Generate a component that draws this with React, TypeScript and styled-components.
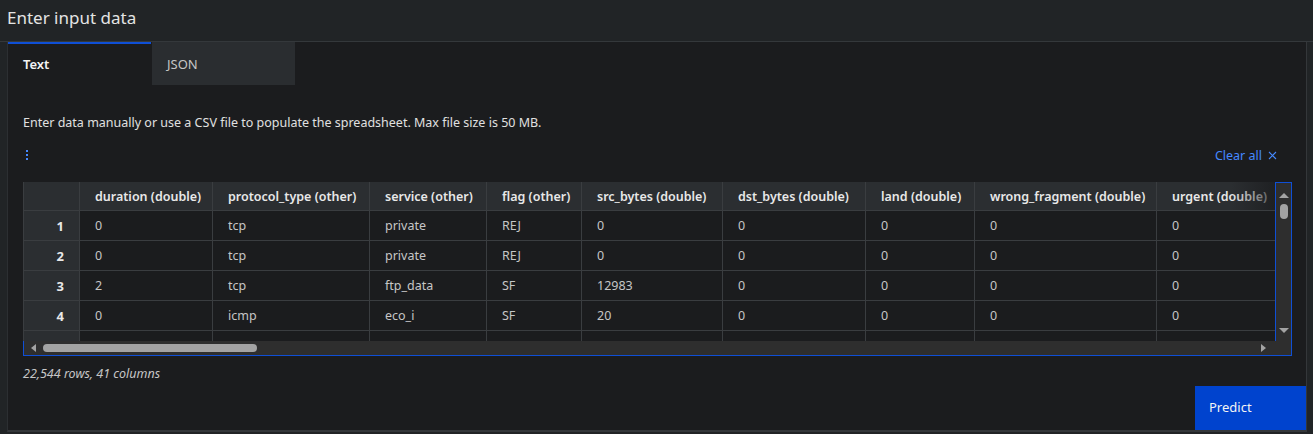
import React from 'react';
import styled, { createGlobalStyle } from 'styled-components';

const GlobalStyle = createGlobalStyle`
  html, body {
    margin: 0;
    padding: 0;
    background: #212426;
  }
  * {
    box-sizing: border-box;
  }
`;

const Page = styled.div`
  height: 434px;
  background: #212426;
  font-family: 'Noto Sans', 'Liberation Sans', sans-serif;
  color: #e0e0e0;
  display: flex;
  flex-direction: column;
  overflow: hidden;
`;

const Title = styled.h2`
  margin: 0;
  height: 42px;
  padding: 6px 0 0 7px;
  font-size: 17px;
  font-weight: 400;
  color: #e4e4e4;
  border-bottom: 1px solid #34383b;
`;

const Panel = styled.section`
  margin: 0 6px 0 7px;
  height: 390px;
  background: #1b1c1e;
  border-left: 1px solid #2c2f32;
  border-right: 1px solid #34373a;
  border-bottom: 2px solid #34373a;
  display: flex;
  flex-direction: column;
`;

const TabList = styled.div`
  display: flex;
  gap: 1px;
  height: 43px;
`;

const Tab = styled.div<{ $active?: boolean }>`
  width: 143px;
  display: flex;
  align-items: center;
  padding: 0 0 1px 15px;
  font-size: 13px;
  font-weight: ${(p) => (p.$active ? 600 : 400)};
  color: ${(p) => (p.$active ? '#f4f4f4' : '#c6c6c6')};
  background: ${(p) => (p.$active ? '#1b1c1e' : '#2a2d30')};
  border-top: 2px solid ${(p) => (p.$active ? '#0f4fd6' : '#2a2d30')};
`;

const Content = styled.div`
  padding: 0 14px 0 15px;
  display: flex;
  flex-direction: column;
`;

const Description = styled.p`
  margin: 29px 0 0;
  font-size: 12.5px;
  line-height: 18px;
  color: #e0e0e0;
`;

const Toolbar = styled.div`
  display: flex;
  justify-content: space-between;
  align-items: center;
  height: 20px;
  margin-top: 13px;
  padding-right: 15px;
`;

const MenuButton = styled.div`
  width: 8px;
  display: flex;
  justify-content: center;
  color: #4589ff;
`;

const ClearAll = styled.div`
  display: flex;
  align-items: center;
  gap: 6px;
  font-size: 12.5px;
  color: #4589ff;
`;

const Grid = styled.div`
  margin-top: 17px;
  height: 174px;
  display: grid;
  grid-template-columns: 1fr 16px;
  grid-template-rows: 1fr 14px;
  border-right: 1px solid #0f4fd6;
  border-bottom: 1px solid #0f4fd6;
`;

const Cells = styled.div`
  overflow: hidden;
  display: flex;
  flex-direction: column;
  background: #1b1c1e;
`;

const Row = styled.div<{ $header?: boolean }>`
  position: relative;
  display: flex;
  flex: none;
  height: ${(p) => (p.$header ? 29 : 30)}px;
  background: ${(p) => (p.$header ? '#2b2e31' : '#1b1c1e')};
  border-bottom: 1px solid #3a3d40;

  ${(p) =>
    p.$header &&
    `&::after {
      content: '';
      position: absolute;
      right: 0;
      top: 0;
      bottom: 0;
      width: 44px;
      background: linear-gradient(to right, rgba(27, 28, 30, 0), rgba(27, 28, 30, 0.75));
    }`}
`;

const Cell = styled.div<{ $w: number; $header?: boolean }>`
  flex: none;
  width: ${(p) => p.$w}px;
  padding-left: 15px;
  display: flex;
  align-items: center;
  font-size: 12.5px;
  white-space: nowrap;
  border-right: 1px solid #3a3d40;
  font-weight: ${(p) => (p.$header ? 600 : 400)};
  color: ${(p) => (p.$header ? '#e8e8e8' : '#c6c6c6')};
`;

const IndexCell = styled.div`
  flex: none;
  width: 57px;
  padding-right: 15px;
  display: flex;
  align-items: center;
  justify-content: flex-end;
  font-size: 13px;
  font-weight: 700;
  color: #e8e8e8;
  background: #2b2e31;
  border-left: 1px solid #3a3d40;
  border-right: 1px solid #3a3d40;
`;

const VScroll = styled.div`
  background: #2e2e2e;
  border-left: 1px solid #0f4fd6;
  border-top: 1px solid #0f4fd6;
  display: flex;
  flex-direction: column;
  align-items: center;
  padding: 10px 0 8px;
  gap: 6px;
`;

const HScroll = styled.div`
  background: #2e2e2e;
  border-left: 1px solid #0f4fd6;
  display: flex;
  align-items: center;
  padding: 0 9px 0 7px;
  gap: 7px;
`;

const Corner = styled.div`
  background: #2e2e2e;
`;

const Thumb = styled.div<{ $horizontal?: boolean }>`
  background: #a3a3a3;
  border-radius: 4px;
  width: ${(p) => (p.$horizontal ? '214px' : '8px')};
  height: ${(p) => (p.$horizontal ? '8px' : '15px')};
`;

const Arrow = styled.div<{ $dir: 'up' | 'down' | 'left' | 'right' }>`
  width: 0;
  height: 0;
  border: 4px solid transparent;
  ${(p) =>
    p.$dir === 'up'
      ? 'border-bottom: 5px solid #a3a3a3; border-top-width: 0; border-left-width: 5px; border-right-width: 5px;'
      : p.$dir === 'down'
      ? 'border-top: 5px solid #a3a3a3; border-bottom-width: 0; border-left-width: 5px; border-right-width: 5px;'
      : p.$dir === 'left'
      ? 'border-right: 5px solid #a3a3a3; border-left-width: 0;'
      : 'border-left: 5px solid #a3a3a3; border-right-width: 0;'}
`;

const Spacer = styled.div`
  flex: 1;
`;

const Footer = styled.div`
  margin-top: 9px;
  font-size: 12.5px;
  font-style: italic;
  color: #c6c6c6;
`;

const Actions = styled.div`
  margin-top: auto;
  display: flex;
  justify-content: flex-end;
`;

const PredictButton = styled.button`
  width: 111px;
  height: 44px;
  border: none;
  background: #0043ce;
  color: #f4f4f4;
  font-family: inherit;
  font-size: 13px;
  text-align: left;
  padding: 0 0 2px 14px;
`;

const columns = [
  { name: 'duration (double)', w: 133 },
  { name: 'protocol_type (other)', w: 157 },
  { name: 'service (other)', w: 117 },
  { name: 'flag (other)', w: 95 },
  { name: 'src_bytes (double)', w: 141 },
  { name: 'dst_bytes (double)', w: 143 },
  { name: 'land (double)', w: 109 },
  { name: 'wrong_fragment (double)', w: 182 },
  { name: 'urgent (double)', w: 140 },
];

const rows = [
  ['0', 'tcp', 'private', 'REJ', '0', '0', '0', '0', '0'],
  ['0', 'tcp', 'private', 'REJ', '0', '0', '0', '0', '0'],
  ['2', 'tcp', 'ftp_data', 'SF', '12983', '0', '0', '0', '0'],
  ['0', 'icmp', 'eco_i', 'SF', '20', '0', '0', '0', '0'],
  ['', '', '', '', '', '', '', '', ''],
];

function DotsIcon() {
  return (
    <svg width="4" height="12" viewBox="0 0 4 12" fill="currentColor">
      <rect x="1" y="1" width="2" height="2" />
      <rect x="1" y="5" width="2" height="2" />
      <rect x="1" y="9" width="2" height="2" />
    </svg>
  );
}

function CloseIcon() {
  return (
    <svg width="9" height="9" viewBox="0 0 9 9" stroke="currentColor" strokeWidth="1.1">
      <path d="M1 1l7 7M8 1L1 8" />
    </svg>
  );
}

export default function App() {
  return (
    <>
      <GlobalStyle />
      <Page>
        <Title>Enter input data</Title>
        <Panel>
          <TabList>
            <Tab $active>Text</Tab>
            <Tab>JSON</Tab>
          </TabList>
          <Content>
            <Description>
              Enter data manually or use a CSV file to populate the spreadsheet. Max file size is 50 MB.
            </Description>
            <Toolbar>
              <MenuButton>
                <DotsIcon />
              </MenuButton>
              <ClearAll>
                Clear all <CloseIcon />
              </ClearAll>
            </Toolbar>
            <Grid>
              <Cells>
                <Row $header>
                  <IndexCell />
                  {columns.map((c) => (
                    <Cell key={c.name} $w={c.w} $header>
                      {c.name}
                    </Cell>
                  ))}
                </Row>
                {rows.map((r, i) => (
                  <Row key={i}>
                    <IndexCell>{r[0] === '' ? '' : i + 1}</IndexCell>
                    {r.map((v, j) => (
                      <Cell key={j} $w={columns[j].w}>
                        {v}
                      </Cell>
                    ))}
                  </Row>
                ))}
              </Cells>
              <VScroll>
                <Arrow $dir="up" />
                <Thumb />
                <Spacer />
                <Arrow $dir="down" />
              </VScroll>
              <HScroll>
                <Arrow $dir="left" />
                <Thumb $horizontal />
                <Spacer />
                <Arrow $dir="right" />
              </HScroll>
              <Corner />
            </Grid>
            <Footer>22,544 rows, 41 columns</Footer>
          </Content>
          <Actions>
            <PredictButton>Predict</PredictButton>
          </Actions>
        </Panel>
      </Page>
    </>
  );
}
